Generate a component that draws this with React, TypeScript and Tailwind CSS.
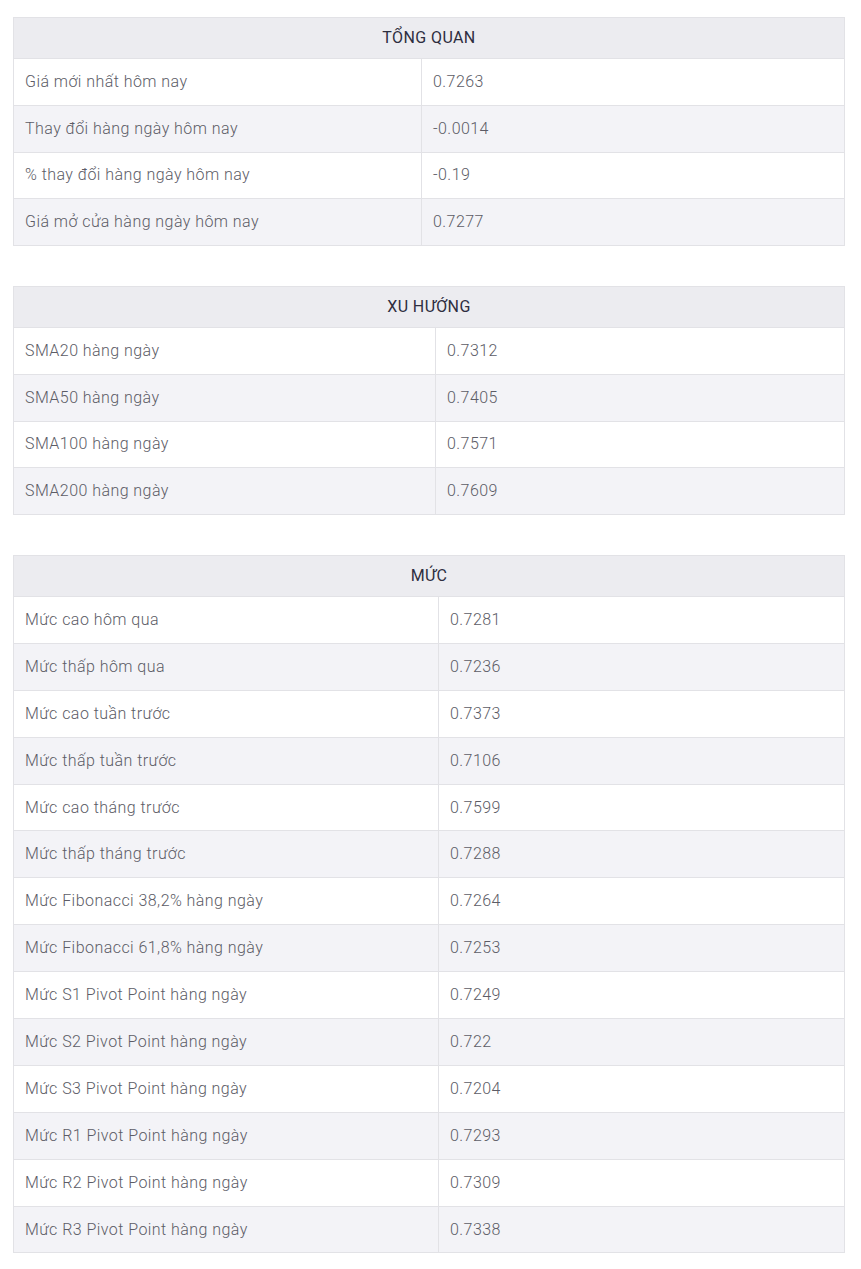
import React from "react";

type Section = { title: string; split: number; rowH: string; rows: [string, string][] };

const sections: Section[] = [
  {
    title: "TỔNG QUAN",
    split: 408,
    rowH: "h-[46.75px]",
    rows: [
      ["Giá mới nhất hôm nay", "0.7263"],
      ["Thay đổi hàng ngày hôm nay", "-0.0014"],
      ["% thay đổi hàng ngày hôm nay", "-0.19"],
      ["Giá mở cửa hàng ngày hôm nay", "0.7277"],
    ],
  },
  {
    title: "XU HƯỚNG",
    split: 422,
    rowH: "h-[46.75px]",
    rows: [
      ["SMA20 hàng ngày", "0.7312"],
      ["SMA50 hàng ngày", "0.7405"],
      ["SMA100 hàng ngày", "0.7571"],
      ["SMA200 hàng ngày", "0.7609"],
    ],
  },
  {
    title: "MỨC",
    split: 425,
    rowH: "h-[46.9px]",
    rows: [
      ["Mức cao hôm qua", "0.7281"],
      ["Mức thấp hôm qua", "0.7236"],
      ["Mức cao tuần trước", "0.7373"],
      ["Mức thấp tuần trước", "0.7106"],
      ["Mức cao tháng trước", "0.7599"],
      ["Mức thấp tháng trước", "0.7288"],
      ["Mức Fibonacci 38,2% hàng ngày", "0.7264"],
      ["Mức Fibonacci 61,8% hàng ngày", "0.7253"],
      ["Mức S1 Pivot Point hàng ngày", "0.7249"],
      ["Mức S2 Pivot Point hàng ngày", "0.722"],
      ["Mức S3 Pivot Point hàng ngày", "0.7204"],
      ["Mức R1 Pivot Point hàng ngày", "0.7293"],
      ["Mức R2 Pivot Point hàng ngày", "0.7309"],
      ["Mức R3 Pivot Point hàng ngày", "0.7338"],
    ],
  },
];

function Table({ s }: { s: Section }) {
  return (
    <div className="w-[832px] border border-[#e2e2e6] bg-white">
      <div className="h-[40px] flex items-center justify-center bg-[#ececf0] text-[#2e2e40] text-[16px] tracking-[0.4px]">
        {s.title}
      </div>
      {s.rows.map(([k, v], i) => (
        <div
          key={k}
          className={`flex ${s.rowH} border-t border-[#e2e2e6] ${i % 2 === 1 ? "bg-[#f3f3f7]" : "bg-white"}`}
        >
          <div
            className="flex items-center pl-[11px] border-r border-[#e2e2e6] text-[#5c5c66] text-[16px] font-light tracking-[0.45px]"
            style={{ width: s.split }}
          >
            {k}
          </div>
          <div className="flex-1 flex items-center pl-[11px] text-[#5c5c66] text-[16px] font-light tracking-[0.45px]">
            {v}
          </div>
        </div>
      ))}
    </div>
  );
}

export default function App() {
  return (
    <div
      className="bg-white min-h-[1269px] pt-[17px] pl-[13px] flex flex-col gap-[40px]"
      style={{ fontFamily: "Roboto, 'Noto Sans', sans-serif" }}
    >
      {sections.map((s) => (
        <Table key={s.title} s={s} />
      ))}
    </div>
  );
}
